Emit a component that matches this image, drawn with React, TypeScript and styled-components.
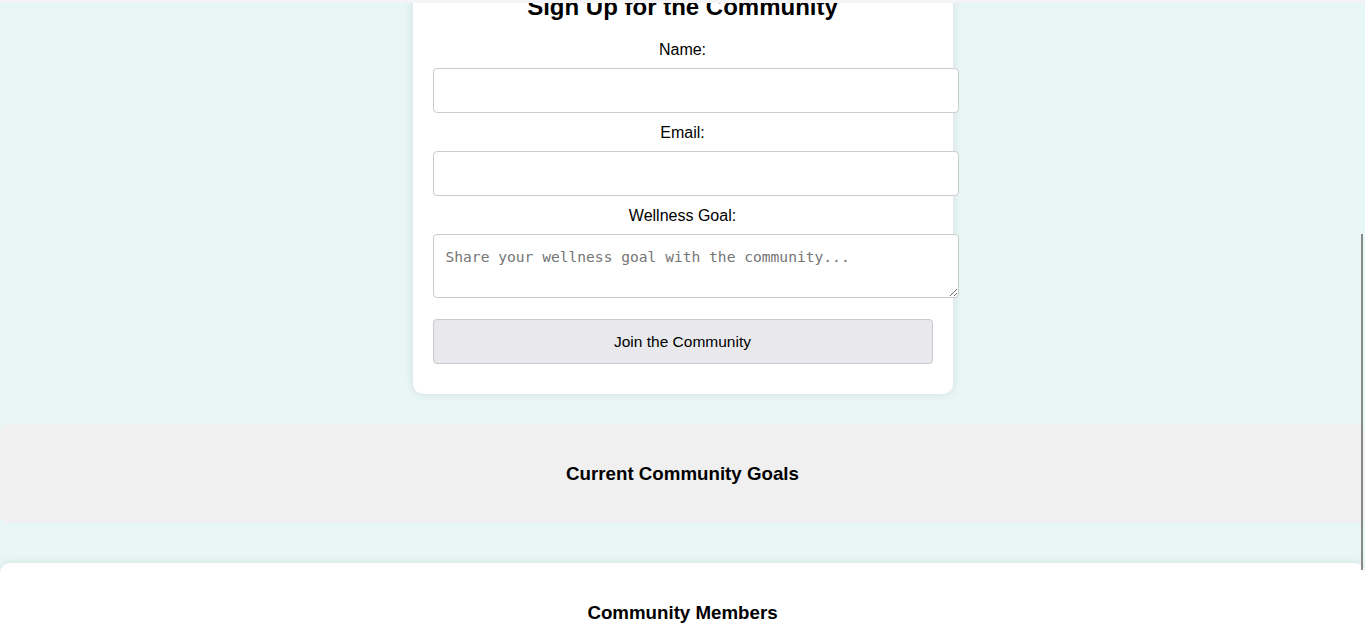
import React from 'react';
import styled, { createGlobalStyle } from 'styled-components';

const GlobalStyle = createGlobalStyle`
  html, body {
    margin: 0;
    padding: 0;
    background: #e8f6f5;
    overflow-x: hidden;
    font-family: "Liberation Sans", Arial, sans-serif;
    color: #000;
  }
`;

const Page = styled.div`
  min-height: 628px;
  background: #e8f6f5;
  overflow: hidden;
`;

// bottom edge of the sticky header, scrolled past
const TopStrip = styled.div`
  position: fixed;
  top: 0;
  left: 0;
  right: 0;
  height: 3px;
  background: #f4f4f7;
  z-index: 5;
`;

const ScrollThumb = styled.div`
  position: fixed;
  top: 234px;
  right: 2px;
  width: 2px;
  height: 336px;
  background: #888;
  z-index: 5;
`;

const FormCard = styled.form`
  width: 500px;
  margin: -27px auto 0;
  padding: 20px 20px 30px;
  background: #fff;
  border-radius: 10px;
  box-shadow: 0 0 10px rgba(0, 0, 0, 0.1);
  text-align: center;
`;

const Title = styled.h2`
  margin: 0 0 19px;
  font-size: 24px;
  line-height: 28px;
  font-weight: bold;
`;

const Label = styled.label`
  display: block;
  font-size: 16px;
  line-height: 18px;
  padding-top: 1px;
  margin-bottom: 9px;
`;

const Input = styled.input`
  display: block;
  width: 100%;
  height: 19px;
  padding: 12px;
  margin: 0 0 10px;
  border: 1px solid #ccc;
  border-radius: 4px;
  font-size: 16px;
  font-family: "Liberation Sans", Arial, sans-serif;
  background: #fff;
`;

const TextArea = styled.textarea`
  display: block;
  width: 100%;
  height: 38px;
  padding: 12px;
  margin: 0 0 21px;
  border: 1px solid #ccc;
  border-radius: 4px;
  font-family: "DejaVu Sans Mono", monospace;
  font-size: 14.6px;
  line-height: 19px;
  background: #fff;

  &::placeholder {
    color: #757575;
  }
`;

const SubmitButton = styled.button`
  display: block;
  width: 100%;
  height: 45px;
  border: 1px solid #c9c9ce;
  border-radius: 4px;
  background: #e9e9ed;
  font-family: "Liberation Sans", Arial, sans-serif;
  font-size: 15.5px;
  color: #000;
`;

const Section = styled.section<{ $bg: string; $shadow?: boolean }>`
  box-sizing: border-box;
  width: 100%;
  padding: 20px;
  border-radius: 10px;
  background: ${(p) => p.$bg};
  box-shadow: ${(p) => (p.$shadow ? '0 0 10px rgba(0, 0, 0, 0.1)' : 'none')};
  text-align: center;
`;

const GoalsSection = styled(Section)`
  margin-top: 30px;
  border-radius: 8px;
`;

const MembersSection = styled(Section)`
  margin-top: 40px;
  min-height: 200px;
`;

const SectionTitle = styled.h3`
  margin: 18.72px 0;
  font-size: 18.72px;
  line-height: 21.5px;
  font-weight: bold;
`;

export default function App() {
  return (
    <Page>
      <GlobalStyle />
      <TopStrip />
      <ScrollThumb />
      <FormCard onSubmit={(e) => e.preventDefault()}>
        <Title>Sign Up for the Community</Title>
        <Label htmlFor="name">Name:</Label>
        <Input id="name" type="text" />
        <Label htmlFor="email">Email:</Label>
        <Input id="email" type="email" />
        <Label htmlFor="goal">Wellness Goal:</Label>
        <TextArea id="goal" placeholder="Share your wellness goal with the community..." />
        <SubmitButton type="submit">Join the Community</SubmitButton>
      </FormCard>
      <GoalsSection $bg="#f0f0f0">
        <SectionTitle>Current Community Goals</SectionTitle>
      </GoalsSection>
      <MembersSection $bg="#fff" $shadow>
        <SectionTitle>Community Members</SectionTitle>
      </MembersSection>
    </Page>
  );
}
